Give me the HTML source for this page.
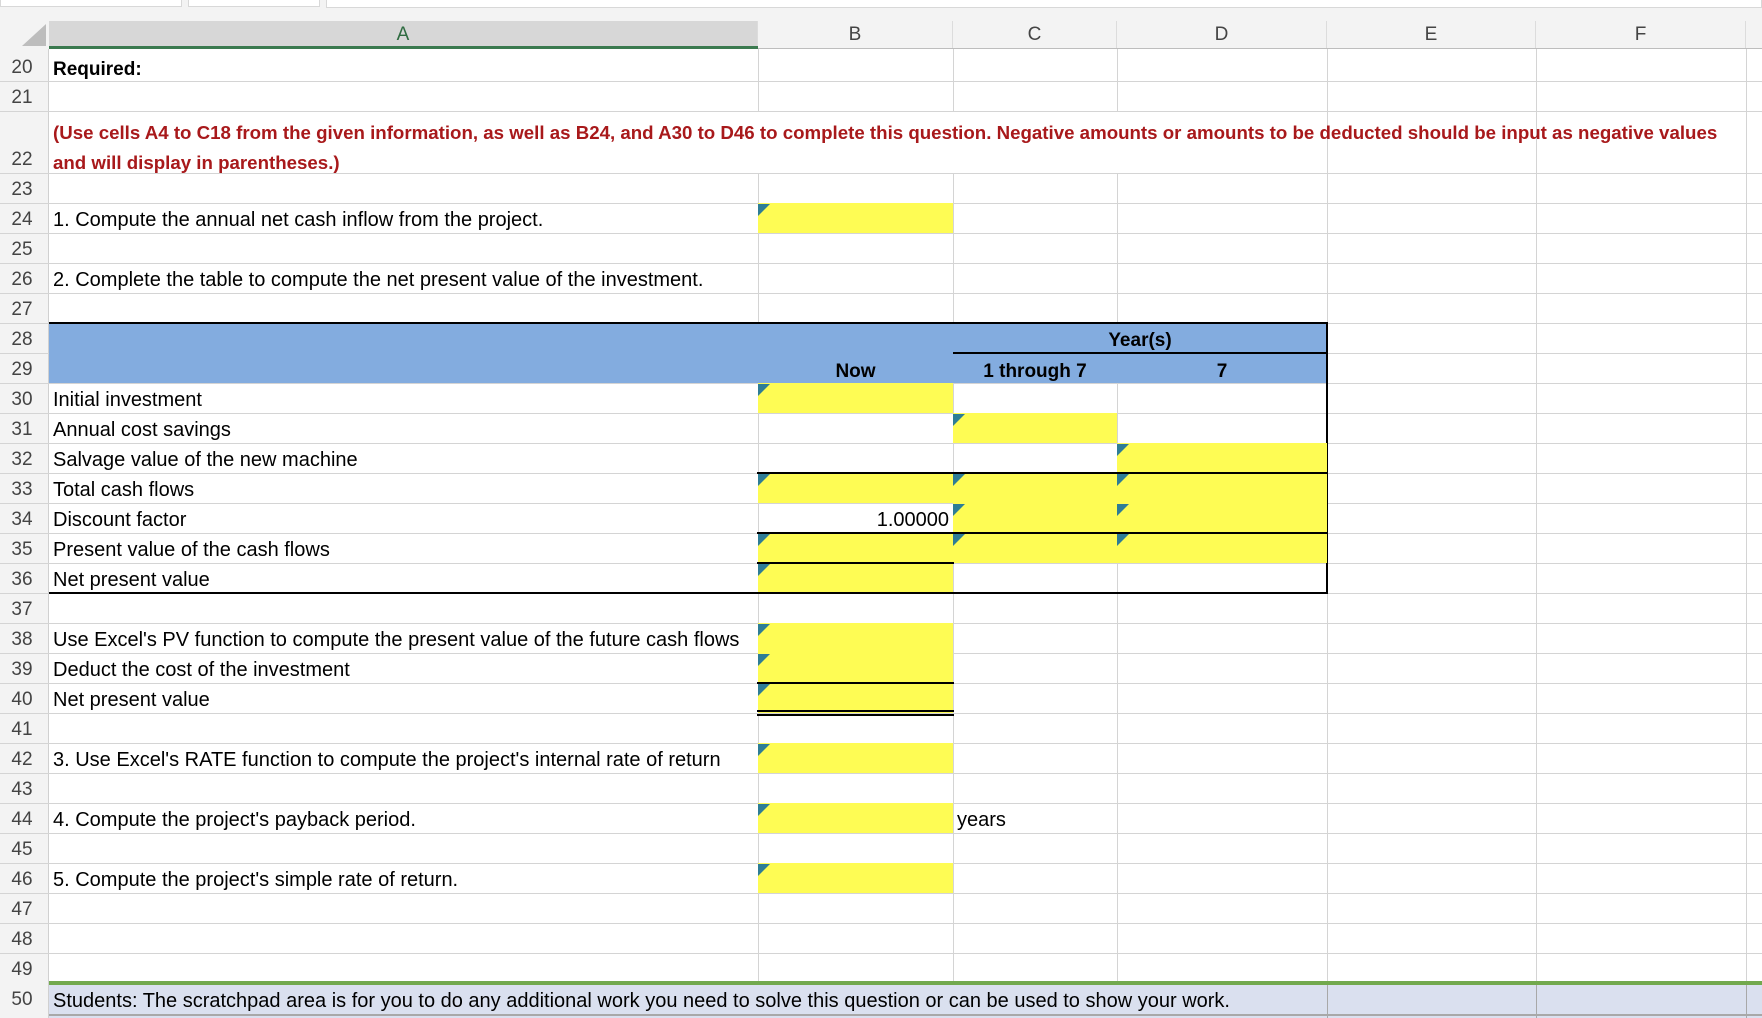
<!DOCTYPE html>
<html><head><meta charset="utf-8">
<style>
*{margin:0;padding:0;box-sizing:border-box}
body{width:1762px;height:1018px;overflow:hidden;background:#fff;position:relative;font-family:"Liberation Sans",Arial,sans-serif;font-size:20px;color:#000}
.a{position:absolute}
.hl{position:absolute;height:1px;background:#d4d4d4}
.vl{position:absolute;width:1px;background:#d4d4d4}
.rn{position:absolute;left:0;width:44px;text-align:center;color:#444;font-size:19px}
.ch{position:absolute;top:21px;height:28px;text-align:center;line-height:28px;color:#444;font-size:19px;border-right:1px solid #dcdcdc}
.y{position:absolute;background:#fefc54}
.t{position:absolute;width:0;height:0;border-top:12px solid #2e7d96;border-right:12px solid transparent}
.bk{position:absolute;background:#000}
.tx{position:absolute;white-space:nowrap;margin-top:2px}
.b{font-weight:bold;font-size:19px}
</style></head><body>
<div class="a" style="left:0;top:0;width:1762px;height:49px;background:#f3f3f3"></div>
<div class="a" style="left:0;top:0;width:182px;height:7px;background:#fff;border:1px solid #d8d8d8;border-top:none"></div>
<div class="a" style="left:188px;top:0;width:132px;height:7px;background:#fff;border:1px solid #d8d8d8;border-top:none"></div>
<div class="a" style="left:326px;top:0;width:1436px;height:8px;background:#fff;border:1px solid #d8d8d8;border-top:none"></div>
<svg class="a" style="left:22px;top:24px" width="24" height="22"><polygon points="24,0 24,22 0,22" fill="#bdbdbd"/></svg>
<div class="ch" style="left:49px;width:709px;background:#d7d7d7;color:#2e6b40">A</div>
<div class="a" style="left:49px;top:46px;width:709px;height:3px;background:#3b7a4f"></div>
<div class="ch" style="left:758px;width:195px">B</div>
<div class="ch" style="left:953px;width:164px">C</div>
<div class="ch" style="left:1117px;width:210px">D</div>
<div class="ch" style="left:1327px;width:209px">E</div>
<div class="ch" style="left:1536px;width:210px">F</div>
<div class="a" style="left:758px;top:48px;width:1004px;height:1px;background:#bdbdbd"></div>
<div class="a" style="left:0;top:49px;width:49px;height:969px;background:#f3f3f3;border-right:1px solid #d0d0d0"></div>

<div class="hl" style="left:0;top:81px;width:1762px"></div>
<div class="hl" style="left:0;top:111px;width:1762px"></div>
<div class="hl" style="left:0;top:173px;width:1762px"></div>
<div class="hl" style="left:0;top:203px;width:1762px"></div>
<div class="hl" style="left:0;top:233px;width:1762px"></div>
<div class="hl" style="left:0;top:263px;width:1762px"></div>
<div class="hl" style="left:0;top:293px;width:1762px"></div>
<div class="hl" style="left:0;top:323px;width:1762px"></div>
<div class="hl" style="left:0;top:353px;width:1762px"></div>
<div class="hl" style="left:0;top:383px;width:1762px"></div>
<div class="hl" style="left:0;top:413px;width:1762px"></div>
<div class="hl" style="left:0;top:443px;width:1762px"></div>
<div class="hl" style="left:0;top:473px;width:1762px"></div>
<div class="hl" style="left:0;top:503px;width:1762px"></div>
<div class="hl" style="left:0;top:533px;width:1762px"></div>
<div class="hl" style="left:0;top:563px;width:1762px"></div>
<div class="hl" style="left:0;top:593px;width:1762px"></div>
<div class="hl" style="left:0;top:623px;width:1762px"></div>
<div class="hl" style="left:0;top:653px;width:1762px"></div>
<div class="hl" style="left:0;top:683px;width:1762px"></div>
<div class="hl" style="left:0;top:713px;width:1762px"></div>
<div class="hl" style="left:0;top:743px;width:1762px"></div>
<div class="hl" style="left:0;top:773px;width:1762px"></div>
<div class="hl" style="left:0;top:803px;width:1762px"></div>
<div class="hl" style="left:0;top:833px;width:1762px"></div>
<div class="hl" style="left:0;top:863px;width:1762px"></div>
<div class="hl" style="left:0;top:893px;width:1762px"></div>
<div class="hl" style="left:0;top:923px;width:1762px"></div>
<div class="hl" style="left:0;top:953px;width:1762px"></div>
<div class="vl" style="left:758px;top:49px;height:62px"></div>
<div class="vl" style="left:953px;top:49px;height:62px"></div>
<div class="vl" style="left:1117px;top:49px;height:62px"></div>
<div class="vl" style="left:1327px;top:49px;height:62px"></div>
<div class="vl" style="left:1536px;top:49px;height:62px"></div>
<div class="vl" style="left:1746px;top:49px;height:969px"></div>
<div class="vl" style="left:1327px;top:111px;height:907px"></div>
<div class="vl" style="left:1536px;top:111px;height:907px"></div>
<div class="vl" style="left:758px;top:173px;height:845px"></div>
<div class="vl" style="left:953px;top:173px;height:845px"></div>
<div class="vl" style="left:1117px;top:173px;height:845px"></div>

<div class="rn" style="top:57px">20</div>
<div class="rn" style="top:87px">21</div>
<div class="rn" style="top:149px">22</div>
<div class="rn" style="top:179px">23</div>
<div class="rn" style="top:209px">24</div>
<div class="rn" style="top:239px">25</div>
<div class="rn" style="top:269px">26</div>
<div class="rn" style="top:299px">27</div>
<div class="rn" style="top:329px">28</div>
<div class="rn" style="top:359px">29</div>
<div class="rn" style="top:389px">30</div>
<div class="rn" style="top:419px">31</div>
<div class="rn" style="top:449px">32</div>
<div class="rn" style="top:479px">33</div>
<div class="rn" style="top:509px">34</div>
<div class="rn" style="top:539px">35</div>
<div class="rn" style="top:569px">36</div>
<div class="rn" style="top:599px">37</div>
<div class="rn" style="top:629px">38</div>
<div class="rn" style="top:659px">39</div>
<div class="rn" style="top:689px">40</div>
<div class="rn" style="top:719px">41</div>
<div class="rn" style="top:749px">42</div>
<div class="rn" style="top:779px">43</div>
<div class="rn" style="top:809px">44</div>
<div class="rn" style="top:839px">45</div>
<div class="rn" style="top:869px">46</div>
<div class="rn" style="top:899px">47</div>
<div class="rn" style="top:929px">48</div>
<div class="rn" style="top:959px">49</div>
<div class="rn" style="top:989px">50</div>

<div class="a" style="left:49px;top:323px;width:1278px;height:60px;background:#83acdf"></div>
<div class="bk" style="left:49px;top:322px;width:1279px;height:2px"></div>
<div class="bk" style="left:953px;top:352px;width:374px;height:2px"></div>
<div class="bk" style="left:1326px;top:322px;width:2px;height:272px"></div>

<div class="y" style="left:758px;top:203px;width:195px;height:30px"></div>
<div class="y" style="left:758px;top:383px;width:195px;height:30px"></div>
<div class="y" style="left:953px;top:413px;width:164px;height:30px"></div>
<div class="y" style="left:1117px;top:443px;width:210px;height:30px"></div>
<div class="y" style="left:758px;top:473px;width:569px;height:30px"></div>
<div class="y" style="left:953px;top:503px;width:374px;height:30px"></div>
<div class="y" style="left:758px;top:533px;width:569px;height:30px"></div>
<div class="y" style="left:758px;top:563px;width:195px;height:30px"></div>
<div class="y" style="left:758px;top:623px;width:195px;height:90px"></div>
<div class="y" style="left:758px;top:743px;width:195px;height:30px"></div>
<div class="y" style="left:758px;top:803px;width:195px;height:30px"></div>
<div class="y" style="left:758px;top:863px;width:195px;height:30px"></div>

<div class="bk" style="left:757px;top:472px;width:571px;height:2px"></div>
<div class="bk" style="left:757px;top:532px;width:571px;height:2px"></div>
<div class="bk" style="left:757px;top:562px;width:197px;height:2px"></div>
<div class="bk" style="left:49px;top:592px;width:1279px;height:2px"></div>
<div class="bk" style="left:757px;top:682px;width:197px;height:2px"></div>
<div class="bk" style="left:757px;top:710px;width:197px;height:2px"></div>
<div class="bk" style="left:757px;top:714px;width:197px;height:2px"></div>

<div class="t" style="left:758px;top:204px"></div>
<div class="t" style="left:758px;top:384px"></div>
<div class="t" style="left:953px;top:414px"></div>
<div class="t" style="left:1117px;top:444px"></div>
<div class="t" style="left:758px;top:474px"></div>
<div class="t" style="left:953px;top:474px"></div>
<div class="t" style="left:1117px;top:474px"></div>
<div class="t" style="left:953px;top:504px"></div>
<div class="t" style="left:1117px;top:504px"></div>
<div class="t" style="left:758px;top:534px"></div>
<div class="t" style="left:953px;top:534px"></div>
<div class="t" style="left:1117px;top:534px"></div>
<div class="t" style="left:758px;top:564px"></div>
<div class="t" style="left:758px;top:624px"></div>
<div class="t" style="left:758px;top:654px"></div>
<div class="t" style="left:758px;top:684px"></div>
<div class="t" style="left:758px;top:744px"></div>
<div class="t" style="left:758px;top:804px"></div>
<div class="t" style="left:758px;top:864px"></div>

<div class="a" style="left:49px;top:983px;width:1713px;height:35px;background:#dae0ef"></div>
<div class="a" style="left:49px;top:981px;width:1713px;height:4px;background:#72a94e"></div>
<div class="a" style="left:49px;top:1014px;width:1713px;height:2px;background:#a8a8a8"></div>
<div class="a" style="left:1327px;top:985px;width:1px;height:33px;background:#a8a8a8"></div>
<div class="a" style="left:1536px;top:985px;width:1px;height:33px;background:#a8a8a8"></div>
<div class="a" style="left:1746px;top:985px;width:1px;height:33px;background:#a8a8a8"></div>

<div class="tx b" style="left:53px;top:57px">Required:</div>
<div class="tx b" style="left:53px;top:116px;color:#a8191b;line-height:30px;font-size:18.7px">(Use cells A4 to C18 from the given information, as well as B24, and A30 to D46 to complete this question. Negative amounts or amounts to be deducted should be input as negative values<br>and will display in parentheses.)</div>
<div class="tx" style="left:53px;top:207px">1. Compute the annual net cash inflow from the project.</div>
<div class="tx" style="left:53px;top:267px">2. Complete the table to compute the net present value of the investment.</div>
<div class="tx b" style="left:953px;top:328px;width:374px;text-align:center">Year(s)</div>
<div class="tx b" style="left:758px;top:359px;width:195px;text-align:center">Now</div>
<div class="tx b" style="left:953px;top:359px;width:164px;text-align:center">1 through 7</div>
<div class="tx b" style="left:1117px;top:359px;width:210px;text-align:center">7</div>
<div class="tx" style="left:53px;top:387px">Initial investment</div>
<div class="tx" style="left:53px;top:417px">Annual cost savings</div>
<div class="tx" style="left:53px;top:447px">Salvage value of the new machine</div>
<div class="tx" style="left:53px;top:477px">Total cash flows</div>
<div class="tx" style="left:53px;top:507px">Discount factor</div>
<div class="tx" style="left:758px;top:507px;width:191px;text-align:right">1.00000</div>
<div class="tx" style="left:53px;top:537px">Present value of the cash flows</div>
<div class="tx" style="left:53px;top:567px">Net present value</div>
<div class="tx" style="left:53px;top:627px">Use Excel's PV function to compute the present value of the future cash flows</div>
<div class="tx" style="left:53px;top:657px">Deduct the cost of the investment</div>
<div class="tx" style="left:53px;top:687px">Net present value</div>
<div class="tx" style="left:53px;top:747px">3. Use Excel's RATE function to compute the project's internal rate of return</div>
<div class="tx" style="left:53px;top:807px">4. Compute the project's payback period.</div>
<div class="tx" style="left:957px;top:807px">years</div>
<div class="tx" style="left:53px;top:867px">5. Compute the project's simple rate of return.</div>
<div class="tx" style="left:53px;top:988px">Students: The scratchpad area is for you to do any additional work you need to solve this question or can be used to show your work.</div>
</body></html>
